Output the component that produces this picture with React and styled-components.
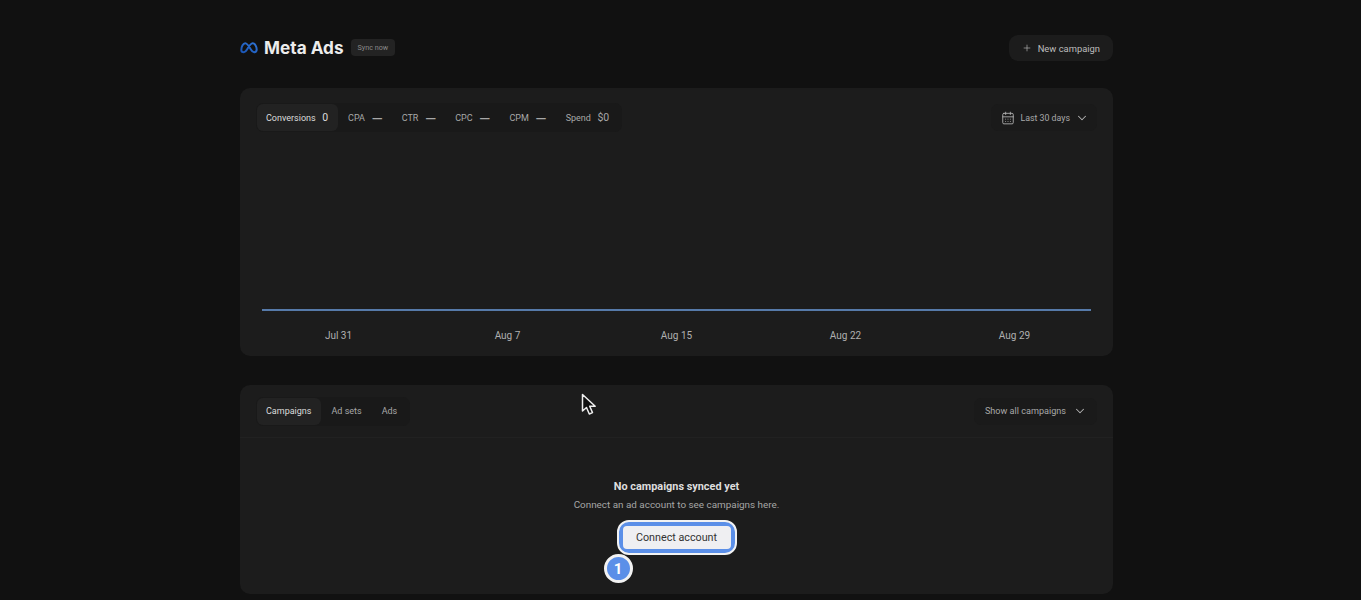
import styled, { createGlobalStyle } from "styled-components";
import { ChevronDown, Plus, CalendarDays } from "lucide-react";

const GlobalStyle = createGlobalStyle`
  html, body {
    margin: 0;
    height: 600px;
    overflow: hidden;
    background: #111111;
  }
  body {
    font-family: Roboto, "Noto Sans", sans-serif;
    color: #d0d0d0;
  }
`;

const metrics = [
  { label: "Conversions", value: "0", active: true },
  { label: "CPA", value: "—", dash: true },
  { label: "CTR", value: "—", dash: true },
  { label: "CPC", value: "—", dash: true },
  { label: "CPM", value: "—", dash: true },
  { label: "Spend", value: "$0" },
];

const dates = ["Jul 31", "Aug 7", "Aug 15", "Aug 22", "Aug 29"];

const MetaLogo = () => (
  <svg width="18" height="12" viewBox="0 0 18 12" fill="none">
    <defs>
      <linearGradient id="metaBlue" x1="0" y1="1" x2="1" y2="0">
        <stop offset="0" stopColor="#1a55b4" />
        <stop offset="1" stopColor="#2f74d6" />
      </linearGradient>
    </defs>
    <path
      d="M1.300 8C1.300 4.500 3.300 1.300 5.200 1.300c2 0 3.500 2.500 5.500 6 1.300 2.300 2.300 3 3.400 3 1.500 0 2.600-1 2.600-2.700 0-3.300-2-6.300-4-6.300-2 0-3.500 2.500-5.500 6-1.300 2.300-2.300 3-3.300 3C2.400 10.300 1.300 9.500 1.300 8z"
      stroke="url(#metaBlue)"
      strokeWidth="2"
    />
  </svg>
);

const Cursor = () => (
  <CursorWrap width="17" height="23" viewBox="0 0 17 23">
    <path
      d="M1.500 1.500v16.500l4-3.500 2.800 6.500 3.200-1.400-2.800-6.300h5.500z"
      fill="#111"
      stroke="#eee"
      strokeWidth="1.500"
      strokeLinejoin="round"
    />
  </CursorWrap>
);

export default function App() {
  return (
    <>
      <GlobalStyle />
      <Page>
        <Header>
          <TitleGroup>
            <MetaLogo />
            <Title>Meta Ads</Title>
            <SyncButton>Sync now</SyncButton>
          </TitleGroup>
          <NewButton>
            <Plus size={10} strokeWidth={1.5} />
            New campaign
          </NewButton>
        </Header>

        <ChartCard>
          <CardBar>
            <Tabs>
              {metrics.map((m) => (
                <Tab key={m.label} $active={m.active}>
                  {m.label}
                  <TabValue $dash={m.dash}>{m.value}</TabValue>
                </Tab>
              ))}
            </Tabs>
            <RangeDropdown>
              <CalendarDays size={14} strokeWidth={1.5} />
              Last 30 days
              <ChevronDown size={14} strokeWidth={1.75} />
            </RangeDropdown>
          </CardBar>
          <ChartArea>
            <svg width="829" height="4" viewBox="0 0 829 4">
              <line x1="0" y1="2" x2="829" y2="2" stroke="#6a9ad8" strokeWidth="1.500" />
            </svg>
          </ChartArea>
          <Axis>
            {dates.map((d) => (
              <AxisLabel key={d}>{d}</AxisLabel>
            ))}
          </Axis>
        </ChartCard>

        <TableCard>
          <TableBar>
            <Tabs>
              <Tab $active>Campaigns</Tab>
              <Tab>Ad sets</Tab>
              <Tab>Ads</Tab>
            </Tabs>
            <Dropdown>
              Show all campaigns
              <ChevronDown size={14} strokeWidth={1.75} />
            </Dropdown>
          </TableBar>
          <Empty>
            <EmptyTitle>No campaigns synced yet</EmptyTitle>
            <EmptyText>Connect an ad account to see campaigns here.</EmptyText>
            <ConnectRing>
              <ConnectButton>Connect account</ConnectButton>
              <StepBadge>1</StepBadge>
            </ConnectRing>
          </Empty>
        </TableCard>
      </Page>
      <Cursor />
    </>
  );
}

// styled components

const Page = styled.div`
  width: 873px;
  margin-left: 240px;
  padding-top: 35px;
`;

const Header = styled.header`
  display: flex;
  align-items: center;
  justify-content: space-between;
  height: 26px;
  margin-bottom: 27px;
`;

const TitleGroup = styled.div`
  display: flex;
  align-items: center;
  padding-bottom: 1px;
`;

const Title = styled.h1`
  margin: 0 7px 0 6px;
  font-family: Inter, sans-serif;
  font-size: 17.200px;
  font-weight: 700;
  color: #ececec;
`;

const SyncButton = styled.button`
  height: 17px;
  padding: 0 7px;
  border: 0;
  border-radius: 4px;
  background: #232323;
  color: #8a8a8a;
  font: 7.200px Roboto, sans-serif;
`;

const NewButton = styled.button`
  display: flex;
  align-items: center;
  gap: 6px;
  height: 26px;
  padding: 0 13px;
  border: 0;
  border-radius: 9px;
  background: #1c1c1c;
  color: #bdbdbd;
  font: 9.400px Roboto, sans-serif;
`;

const Card = styled.section`
  border-radius: 10px;
  background: #1c1c1c;
`;

const ChartCard = styled(Card)`
  height: 268px;
  margin-bottom: 29px;
  padding: 15px 16px 0;
  box-sizing: border-box;
`;

const TableCard = styled(Card)`
  height: 209px;
  display: flex;
  flex-direction: column;
`;

const CardBar = styled.div`
  display: flex;
  align-items: center;
  justify-content: space-between;
`;

const TableBar = styled(CardBar)`
  height: 52px;
  padding: 0 16px;
  border-bottom: 1px solid #212121;
`;

const Tabs = styled.div`
  display: flex;
  height: 29px;
  padding: 1px 3px 1px 1px;
  box-sizing: border-box;
  border-radius: 7px;
  background: #191919;
`;

const Tab = styled.div`
  display: flex;
  align-items: center;
  gap: 6.500px;
  padding: 0 10px 0 ${(p) => (p.$active ? "9px" : "10px")};
  border-radius: 6px;
  background: ${(p) => (p.$active ? "#222222" : "transparent")};
  color: ${(p) => (p.$active ? "#dcdcdc" : "#a8a8a8")};
  font-size: 9px;
  white-space: nowrap;
`;

const TabValue = styled.span`
  font-size: ${(p) => (p.$dash ? "14.500px" : "10.500px")};
  margin-right: ${(p) => (p.$dash ? "-1px" : "0")};
  padding-top: ${(p) => (p.$dash ? "4px" : "0")};
`;

const Dropdown = styled.div`
  display: flex;
  align-items: center;
  gap: 7px;
  height: 27px;
  padding: 0 10px 0 11px;
  border-radius: 7px;
  background: #1a1a1a;
  color: #a8a8a8;
  font-size: 9.100px;
  svg {
    color: #b4b4b4;
  }
`;

const RangeDropdown = styled(Dropdown)`
  gap: 5px;
  padding: 0 8px 0 10px;
  font-size: 8.800px;
`;

const ChartArea = styled.div`
  display: flex;
  justify-content: center;
  height: 180px;
  align-items: flex-end;
  svg {
    display: block;
  }
`;

const Axis = styled.div`
  display: grid;
  grid-template-columns: repeat(5, 1fr);
  margin: 18px -2px 0;
`;

const AxisLabel = styled.span`
  text-align: center;
  font-size: 10px;
  color: #b0b0b0;
`;

const Empty = styled.div`
  display: flex;
  flex-direction: column;
  align-items: center;
  padding-top: 42px;
`;

const EmptyTitle = styled.div`
  font-size: 10.900px;
  font-weight: 700;
  color: #dedede;
`;

const EmptyText = styled.div`
  margin-top: 6px;
  font-size: 9.900px;
  color: #a6a6a6;
`;

const ConnectRing = styled.div`
  position: relative;
  margin-top: 10px;
  padding: 4px;
  border: 2px solid #f2f2f2;
  border-radius: 12px;
  background: #5b8fe8;
`;

const ConnectButton = styled.button`
  display: block;
  width: 108px;
  height: 23px;
  padding: 0;
  border: 0;
  border-radius: 4px;
  background: #efeff2;
  color: #333333;
  font: 10.750px Roboto, sans-serif;
`;

const StepBadge = styled.span`
  position: absolute;
  left: -15px;
  top: 32px;
  width: 29px;
  height: 29px;
  box-sizing: border-box;
  display: flex;
  align-items: center;
  justify-content: center;
  border: 3px solid #f2f2f2;
  border-radius: 50%;
  background: #5b8fe8;
  color: #ffffff;
  font-size: 15px;
  font-weight: 700;
`;

const CursorWrap = styled.svg`
  position: absolute;
  left: 581px;
  top: 393px;
`;
